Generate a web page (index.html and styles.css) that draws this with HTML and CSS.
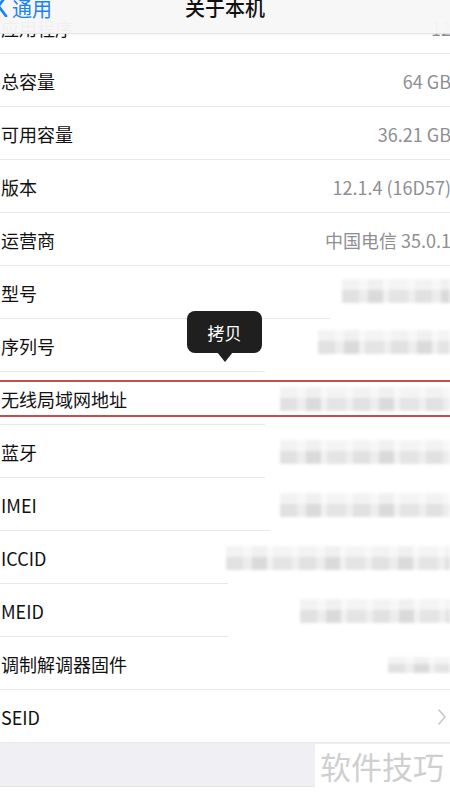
FILE: index.html
```html
<!DOCTYPE html>
<html lang="zh-CN">
<head>
    <meta charset="UTF-8">
    <meta name="viewport" content="width=device-width, initial-scale=1.0">
    <title>关于本机</title>
    <link rel="stylesheet" href="styles.css">
</head>
<body>
<div class="page">
    <header class="navbar">
        <div class="nav-inner">
            <a class="back" href="#">
                <svg class="back-icon" width="11" height="22" viewBox="0 0 11 22">
                    <path d="M9 1 L1.5 11 L9 21" fill="none" stroke="#1a82fb" stroke-width="2.8" stroke-linecap="round" stroke-linejoin="round"/>
                </svg>
                <span>通用</span>
            </a>
            <h1 class="title">关于本机</h1>
        </div>
    </header>

    <main class="list">
        <div class="row"><span class="label">应用程序</span><span class="value">12</span></div>
        <div class="row"><span class="label">总容量</span><span class="value">64 GB</span></div>
        <div class="row"><span class="label">可用容量</span><span class="value">36.21 GB</span></div>
        <div class="row"><span class="label">版本</span><span class="value">12.1.4 (16D57)</span></div>
        <div class="row"><span class="label">运营商</span><span class="value">中国电信 35.0.1</span></div>
        <div class="row line-330"><span class="label">型号</span><span class="mosaic m-model"></span></div>
        <div class="row line-265"><span class="label">序列号</span><span class="mosaic m-serial"></span></div>
        <div class="row line-265 marked"><span class="label">无线局域网地址</span><span class="mosaic m-wifi"></span></div>
        <div class="row line-265"><span class="label">蓝牙</span><span class="mosaic m-bt"></span></div>
        <div class="row line-270"><span class="label">IMEI</span><span class="mosaic m-imei"></span></div>
        <div class="row line-228"><span class="label">ICCID</span><span class="mosaic m-iccid"></span></div>
        <div class="row line-228"><span class="label">MEID</span><span class="mosaic m-meid"></span></div>
        <div class="row"><span class="label">调制解调器固件</span><span class="mosaic m-modem"></span></div>
        <div class="row">
            <span class="label">SEID</span>
            <svg class="chevron" width="8" height="16" viewBox="0 0 8 16">
                <path d="M1 1 L7 8 L1 15" fill="none" stroke="#c7c7cc" stroke-width="1.6" stroke-linecap="round" stroke-linejoin="round"/>
            </svg>
        </div>
        <div class="gap"></div>
        <div class="row blank"></div>
    </main>

    <div class="tooltip">拷贝</div>
    <div class="watermark">软件技巧</div>
</div>
</body>
</html>
```

FILE: styles.css
```css
body {
    margin: 0;
    padding: 0;
    background: #fff;
    font-family: "Noto Sans CJK SC", "Noto Sans", sans-serif;
    color: #111;
    overflow: hidden;
}

.page {
    position: relative;
    width: 450px;
    height: 800px;
    overflow: hidden;
}

/* top bar sits over the first row */
.navbar {
    position: absolute;
    top: 0;
    left: 0;
    right: 0;
    height: 33px;
    background: rgba(247, 247, 247, 0.97);
    border-bottom: 1px solid #e2e2e2;
    box-shadow: 0 1px 2px rgba(0, 0, 0, 0.04);
    z-index: 2;
}

.nav-inner {
    position: relative;
    height: 24px;
    margin-top: -4px;
    display: flex;
    align-items: center;
    justify-content: center;
}

.back {
    position: absolute;
    left: -3px;
    top: 0;
    height: 24px;
    display: flex;
    align-items: center;
    gap: 4px;
    color: #1a82fb;
    text-decoration: none;
    font-size: 20px;
}

.back-icon {
    margin-top: -4px;
}

.title {
    margin: 0;
    font-size: 20px;
    font-weight: 500;
    line-height: 24px;
    color: #111;
}

.list {
    padding-top: 1px;
}

.row {
    height: 53px;
    display: flex;
    align-items: center;
    justify-content: space-between;
    padding-left: 1px;
    box-sizing: border-box;
    background: linear-gradient(#e8e8e8, #e8e8e8) no-repeat left bottom / var(--line, 100%) 1px;
    position: relative;
}

.line-330 { --line: 330px; }
.line-270 { --line: 270px; }
.line-265 { --line: 265px; }
.line-228 { --line: 228px; }

.label {
    font-size: 18px;
    white-space: nowrap;
}

.value {
    font-size: 18px;
    color: #8e8e93;
    white-space: nowrap;
    margin-right: -1px;
}

.chevron {
    margin-right: 4px;
}

/* the red box drawn round the wifi row */
.marked::after {
    content: "";
    position: absolute;
    left: 0;
    right: 0;
    top: 8px;
    height: 33px;
    border-top: 2px solid #c0504d;
    border-bottom: 2px solid #c0504d;
}

/* pixelated, blurred values */
.mosaic {
    height: 24px;
    background:
        linear-gradient(to bottom, rgba(255, 255, 255, 0.6) 0 45%, transparent 45%),
        repeating-linear-gradient(90deg, #dadada 0 17px, #e9e9e9 17px 26px, #d2d2d2 26px 41px, #eeeeee 41px 47px, #dedede 47px 66px, #ebebeb 66px 73px);
    filter: blur(1.8px);
    opacity: 0.8;
}

.m-model { width: 108px; margin-top: -4px; }
.m-serial { width: 132px; margin-top: -8px; }
.m-wifi { width: 170px; }
.m-bt { width: 170px; }
.m-imei { width: 170px; }
.m-iccid { width: 224px; }
.m-meid { width: 150px; }
.m-modem { width: 62px; height: 16px; margin-top: 2px; }

.gap {
    height: 43px;
    background: #efeff4;
}

.blank {
    border-top: 1px solid #e6e6e6;
    background: #fff;
}

.tooltip {
    position: absolute;
    left: 187px;
    top: 311px;
    width: 75px;
    height: 42px;
    border-radius: 8px;
    background: #1f1f1f;
    color: #fff;
    font-size: 17px;
    display: flex;
    align-items: center;
    justify-content: center;
    z-index: 3;
}

.tooltip::after {
    content: "";
    position: absolute;
    left: 30px;
    bottom: -9px;
    border-left: 8px solid transparent;
    border-right: 8px solid transparent;
    border-top: 10px solid #1f1f1f;
}

.watermark {
    position: absolute;
    left: 315px;
    top: 744px;
    width: 135px;
    height: 43px;
    background: #fff;
    color: #cfcfcf;
    font-size: 31px;
    line-height: 43px;
    padding-left: 5px;
    box-sizing: border-box;
    z-index: 3;
}
```
